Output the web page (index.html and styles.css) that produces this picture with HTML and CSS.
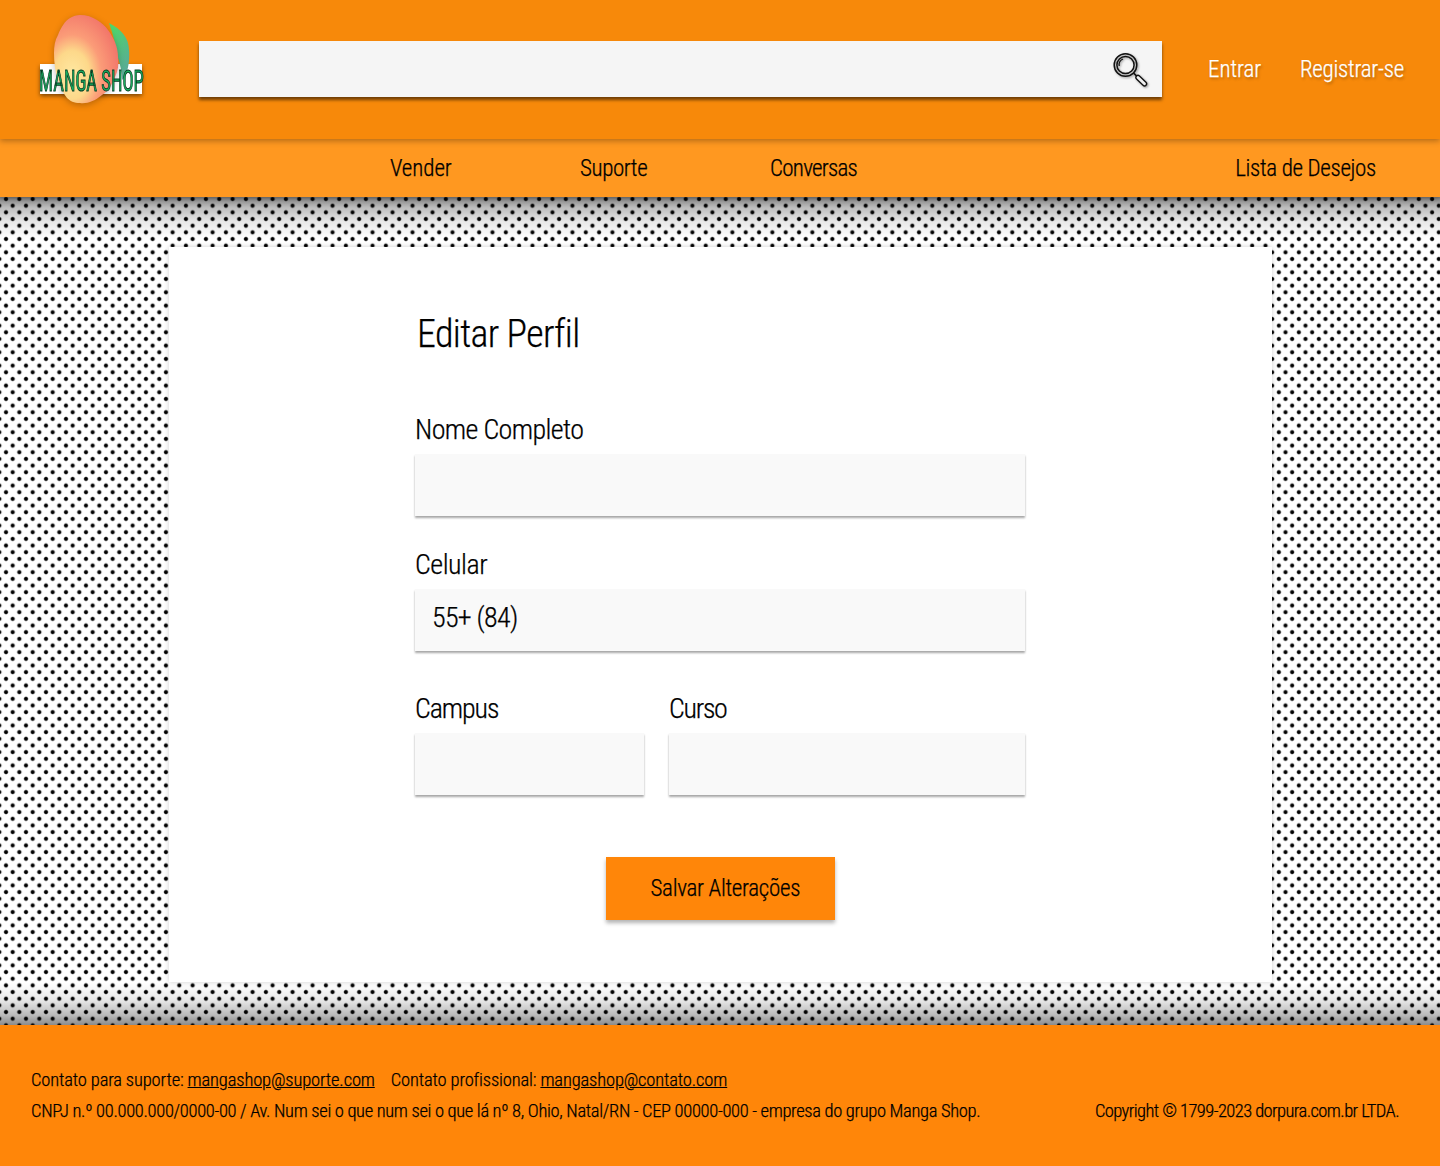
FILE: index.html
```html
<!DOCTYPE html>
<html lang="pt-BR">
<head>
<meta charset="utf-8">
<title>Manga Shop - Editar Perfil</title>
<link rel="stylesheet" href="styles.css">
</head>
<body>
<header class="topbar">
  <a class="logo" href="#" aria-label="Manga Shop">
    <svg class="logo-art" width="110" height="100" viewBox="0 0 110 100" aria-hidden="true">
      <defs>
        <radialGradient id="mango" cx="28%" cy="68%" r="76%">
          <stop offset="0" stop-color="#ffe9a2"/>
          <stop offset="0.36" stop-color="#fdd88a"/>
          <stop offset="0.6" stop-color="#fb9c78"/>
          <stop offset="1" stop-color="#f2756a"/>
        </radialGradient>
        <linearGradient id="leaf" x1="0.2" y1="0" x2="0.7" y2="1">
          <stop offset="0" stop-color="#4fd868"/>
          <stop offset="1" stop-color="#5aa89a"/>
        </linearGradient>
      </defs>
      <rect class="band" x="3" y="50" width="102" height="30" fill="#fff"/>
      <path d="M72 9 C84 15 92 24 92 36 C93 46 91 56 88 63 L85 66 C85 58 83 50 81 44 C79 32 76 20 72 9Z" fill="url(#leaf)"/>
      <path class="fruit" d="M43 1 C56 1 66 9 71 16 C77 24 81 33 81 43 C82 50 81 57 78 63 C75 71 71 77 65 81 C58 87 50 90 43 89 C37 89 33 87 30 84 C26 79 23 72 21 66 C18 57 17 48 17 39 C17 32 18 26 21 21 C24 13 28 7 33 4 C36 2 40 1 43 1Z" fill="url(#mango)"/>
    </svg>
    <span class="logo-text">MANGA SHOP</span>
  </a>
  <div class="search">
    <svg class="search-icon" width="36" height="36" viewBox="0 0 36 36" aria-hidden="true">
      <g fill="none" stroke="#111">
        <circle cx="13.5" cy="14" r="11.3" stroke-width="1.5"/>
        <circle cx="13.5" cy="14" r="8.6" stroke-width="1.5"/>
        <path d="M7.2 15 A6.6 6.6 0 0 1 11 8" stroke-width="1.2"/>
        <path d="M21.6 22.2 L25 25.4" stroke-width="1.6"/>
        <path d="M26 26.5 L32.5 32.8" stroke-width="5.5" stroke-linecap="round"/>
        <path d="M26 26.5 L32.5 32.8" stroke-width="2.8" stroke-linecap="round" stroke="#f0f0f0"/>
      </g>
    </svg>
  </div>
  <nav class="auth">
    <a href="#" class="enter">Entrar</a>
    <a href="#" class="register">Registrar-se</a>
  </nav>
</header>
<nav class="menu">
  <a href="#" class="item sell">Vender</a>
  <a href="#" class="item">Suporte</a>
  <a href="#" class="item talk">Conversas</a>
  <a href="#" class="wish">Lista de Desejos</a>
</nav>
<main class="stage">
  <section class="card">
    <form class="form">
      <h1>Editar Perfil</h1>
      <label class="field f-name"><span>Nome Completo</span><div class="input"></div></label>
      <label class="field f-phone"><span>Celular</span><div class="input">55+ (84)</div></label>
      <div class="pair">
        <label class="field campus"><span>Campus</span><div class="input"></div></label>
        <label class="field course"><span>Curso</span><div class="input"></div></label>
      </div>
      <div class="actions"><button type="button">Salvar Alterações</button></div>
    </form>
  </section>
</main>
<footer class="foot">
  <p class="contacts">Contato para suporte: <a href="#">mangashop@suporte.com</a><span class="sep">Contato profissional: <a href="#">mangashop@contato.com</a></span></p>
  <p class="row"><span class="cnpj">CNPJ n.º 00.000.000/0000-00 / Av. Num sei o que num sei o que lá nº 8, Ohio, Natal/RN - CEP 00000-000 - empresa do grupo Manga Shop.</span><span class="copy">Copyright © 1799-2023 dorpura.com.br LTDA.</span></p>
</footer>
</body>
</html>
```
FILE: styles.css
```css
* { box-sizing: border-box; }
html, body { margin: 0; padding: 0; }
body { font-family: "Liberation Sans Narrow", "Roboto Condensed", "Liberation Sans", sans-serif; font-weight: 300; color: #000; -webkit-text-stroke: .25px currentColor; }
a { color: inherit; text-decoration: none; }

.topbar { height: 139px; background: #f7890a; display: flex; align-items: flex-start; position: relative; z-index: 3; box-shadow: 0 2px 6px rgba(0,0,0,.3); }
.logo { position: relative; width: 110px; height: 100px; margin: 14px 0 0 37px; flex: none; }
.logo-art { display: block; overflow: visible; }
.band { filter: drop-shadow(0 2px 2px rgba(0,0,0,.5)); }
.fruit { filter: drop-shadow(0 2px 3px rgba(0,0,0,.25)); }
.logo-text { position: absolute; left: 2px; top: 50px; font-size: 29px; line-height: 34px; font-weight: 400; color: #18b060; -webkit-text-stroke: .9px #04351f; white-space: nowrap; transform: scaleX(.64); transform-origin: 0 50%; }
.search { width: 963px; height: 56px; margin: 41px 0 0 52px; flex: none; background: #f5f5f5; box-shadow: 0 3px 3px rgba(0,0,0,.55); display: flex; justify-content: flex-end; align-items: center; padding-right: 14px; }
.search-icon { display: block; filter: drop-shadow(1px 1px 1px rgba(0,0,0,.4)); }
.auth { display: flex; margin: 56px 0 0 46px; font-size: 23px; letter-spacing: -.05px; color: #fff; text-shadow: 1px 2px 3px rgba(0,0,0,.3); white-space: nowrap; }
.enter { width: 92px; }
.register { letter-spacing: -.28px; }

.menu { height: 58px; background: #ff9820; display: flex; align-items: center; font-size: 23px; letter-spacing: -.42px; position: relative; z-index: 2; padding: 1px 64px 0 390px; box-shadow: 0 2px 4px rgba(0,0,0,.25); }
.item { width: 190px; }
.sell { letter-spacing: -.1px; }
.talk { letter-spacing: -.75px; }
.wish { margin-left: auto; white-space: nowrap; letter-spacing: -.35px; }

.stage { height: 828px; padding: 50px 168px 43px 169px; position: relative;
  background-color: #fff;
  background-image: radial-gradient(circle at center, #000 0, #000 1.4px, transparent 2.6px), radial-gradient(circle at center, #000 0, #000 1.4px, transparent 2.6px);
  background-size: 13.333px 13.333px;
  background-position: -0.67px -4.67px, 6px 2px;
}
.stage::before { content: ""; position: absolute; inset: 0; background: linear-gradient(to bottom, rgba(0,0,0,.5), rgba(0,0,0,.27) 10px, rgba(0,0,0,.09) 25px, rgba(0,0,0,0) 42px, rgba(0,0,0,0) 786px, rgba(0,0,0,.09) 803px, rgba(0,0,0,.27) 818px, rgba(0,0,0,.45)); pointer-events: none; }
.card { position: relative; height: 735px; background: #fff; padding: 0 247px 0 246px; box-shadow: 0 0 5px rgba(0,0,0,.2); }
.form { display: flex; flex-direction: column; }
h1 { font-weight: 300; font-size: 38px; letter-spacing: -.65px; line-height: 50px; margin: 62px 0 0 2px; height: 50px; }
.field { display: block; }
.field span { display: block; height: 42px; font-size: 28px; line-height: 36px; }
.input { height: 62px; background: #f9f9f9; box-shadow: 0 2px 2px rgba(0,0,0,.35); font-size: 28px; letter-spacing: -.69px; line-height: 58px; padding-left: 17px; }
.f-name { margin-top: 53px; }
.f-name span { letter-spacing: -.62px; }
.f-phone { margin-top: 31px; }
.f-phone span { letter-spacing: -.5px; }
.pair { display: flex; gap: 25px; margin-top: 40px; }
.campus { width: 229px; }
.campus span { letter-spacing: -1.1px; }
.course { width: 356px; }
.course span { letter-spacing: -1.3px; }
.actions { display: flex; justify-content: center; margin-top: 62px; }
button { width: 229px; height: 63px; border: 0; background: #ff8609; font: inherit; font-size: 23px; letter-spacing: -.3px; color: #000; text-align: left; padding: 0 0 0 45px; box-shadow: 0 3px 4px rgba(0,0,0,.3); }

.foot { height: 141px; background: #ff8609; padding: 40px 41px 0 31px; font-size: 18.5px; line-height: 31px; white-space: nowrap; }
.foot p { margin: 0; }
.foot a { text-decoration: underline; }
.contacts { letter-spacing: -.15px; }
.sep { margin-left: 16px; }
.row { display: flex; justify-content: space-between; }
.cnpj { letter-spacing: -.33px; }
.copy { letter-spacing: -.58px; }
```
